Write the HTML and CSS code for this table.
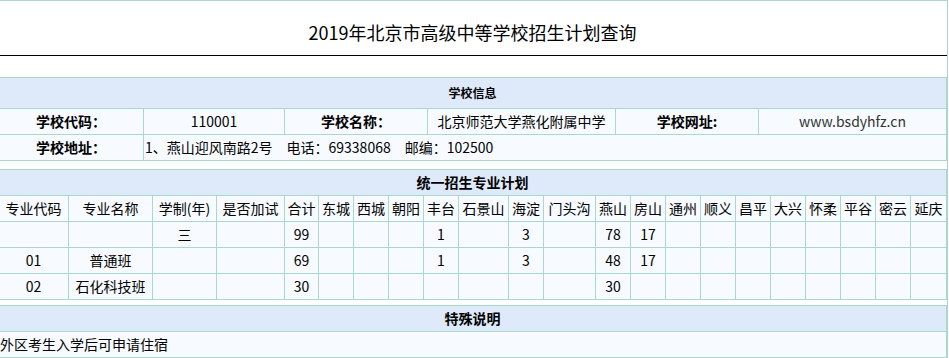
FILE: index.html
```html
<!DOCTYPE html>
<html lang="zh-CN">
<head>
<meta charset="utf-8">
<title>2019年北京市高级中等学校招生计划查询</title>
<link rel="stylesheet" href="styles.css">
</head>
<body>
<div class="page">
  <h1 class="title">2019年北京市高级中等学校招生计划查询</h1>

  <section class="grid info">
    <div class="band band-lg">学校信息</div>
    <div class="c lbl">学校代码：</div>
    <div class="c">110001</div>
    <div class="c lbl">学校名称：</div>
    <div class="c">北京师范大学燕化附属中学</div>
    <div class="c lbl">学校网址:</div>
    <div class="c url">www.bsdyhfz.cn</div>
    <div class="c lbl">学校地址：</div>
    <div class="c left span5">1、燕山迎风南路2号　电话：69338068　邮编：102500</div>
  </section>

  <section class="grid plan">
    <div class="band">统一招生专业计划</div>
    <div class="c">专业代码</div>
    <div class="c">专业名称</div>
    <div class="c">学制(年)</div>
    <div class="c">是否加试</div>
    <div class="c">合计</div>
    <div class="c">东城</div>
    <div class="c">西城</div>
    <div class="c">朝阳</div>
    <div class="c">丰台</div>
    <div class="c">石景山</div>
    <div class="c">海淀</div>
    <div class="c">门头沟</div>
    <div class="c">燕山</div>
    <div class="c">房山</div>
    <div class="c">通州</div>
    <div class="c">顺义</div>
    <div class="c">昌平</div>
    <div class="c">大兴</div>
    <div class="c">怀柔</div>
    <div class="c">平谷</div>
    <div class="c">密云</div>
    <div class="c">延庆</div>

    <div class="c"></div>
    <div class="c"></div>
    <div class="c">三</div>
    <div class="c"></div>
    <div class="c">99</div>
    <div class="c"></div>
    <div class="c"></div>
    <div class="c"></div>
    <div class="c">1</div>
    <div class="c"></div>
    <div class="c">3</div>
    <div class="c"></div>
    <div class="c">78</div>
    <div class="c">17</div>
    <div class="c"></div>
    <div class="c"></div>
    <div class="c"></div>
    <div class="c"></div>
    <div class="c"></div>
    <div class="c"></div>
    <div class="c"></div>
    <div class="c"></div>

    <div class="c">01</div>
    <div class="c">普通班</div>
    <div class="c"></div>
    <div class="c"></div>
    <div class="c">69</div>
    <div class="c"></div>
    <div class="c"></div>
    <div class="c"></div>
    <div class="c">1</div>
    <div class="c"></div>
    <div class="c">3</div>
    <div class="c"></div>
    <div class="c">48</div>
    <div class="c">17</div>
    <div class="c"></div>
    <div class="c"></div>
    <div class="c"></div>
    <div class="c"></div>
    <div class="c"></div>
    <div class="c"></div>
    <div class="c"></div>
    <div class="c"></div>

    <div class="c">02</div>
    <div class="c">石化科技班</div>
    <div class="c"></div>
    <div class="c"></div>
    <div class="c">30</div>
    <div class="c"></div>
    <div class="c"></div>
    <div class="c"></div>
    <div class="c"></div>
    <div class="c"></div>
    <div class="c"></div>
    <div class="c"></div>
    <div class="c">30</div>
    <div class="c"></div>
    <div class="c"></div>
    <div class="c"></div>
    <div class="c"></div>
    <div class="c"></div>
    <div class="c"></div>
    <div class="c"></div>
    <div class="c"></div>
    <div class="c"></div>
  </section>

  <section class="grid note">
    <div class="band">特殊说明</div>
    <div class="c left note-text">外区考生入学后可申请住宿</div>
  </section>
</div>
</body>
</html>
```

FILE: styles.css
```css
* {
  box-sizing: border-box;
}

html,
body {
  margin: 0;
  padding: 0;
  background: #ffffff;
}

body {
  font-family: "Noto Sans CJK SC", "Microsoft YaHei", sans-serif;
  font-size: 14px;
  color: #000000;
  overflow: hidden;
}

.page {
  width: 951px;
  margin-left: -3px;
  border: 1px solid #a9d8cc;
  border-bottom: none;
}

.title {
  margin: 0;
  height: 55px;
  padding-top: 19px;
  border-bottom: 1px solid #000000;
  font-size: 18px;
  font-weight: normal;
  line-height: 24px;
  text-align: center;
}

.grid {
  display: grid;
  border-top: 1px solid #a9d8cc;
  border-left: 1px solid #a9d8cc;
}

.info {
  margin-top: 21px;
  grid-template-columns: 145px 141px 143px 188px 143px 188px;
}

.plan {
  margin-top: 8px;
  grid-template-columns: 70px 84px 64px 68px 34px 35px 35px 35px 35px 50px 35px 52px repeat(9, 35px) 36px;
}

.note {
  margin-top: 5px;
  grid-template-columns: 948px;
}

.c,
.band {
  height: 26px;
  line-height: 25px;
  border-right: 1px solid #a9d8cc;
  border-bottom: 1px solid #a9d8cc;
  background: #f7fbff;
  text-align: center;
  white-space: nowrap;
  overflow: hidden;
}

.band {
  grid-column: 1 / -1;
  background: #deeafa;
  font-weight: bold;
}

.band-lg {
  height: 31px;
  line-height: 30px;
  font-size: 12px;
}

.lbl {
  font-weight: bold;
}

.url {
  color: #333333;
}

.left {
  text-align: left;
  padding-left: 1px;
}

.span5 {
  grid-column: span 5;
}

.note-text {
  padding-left: 1px;
}
```
